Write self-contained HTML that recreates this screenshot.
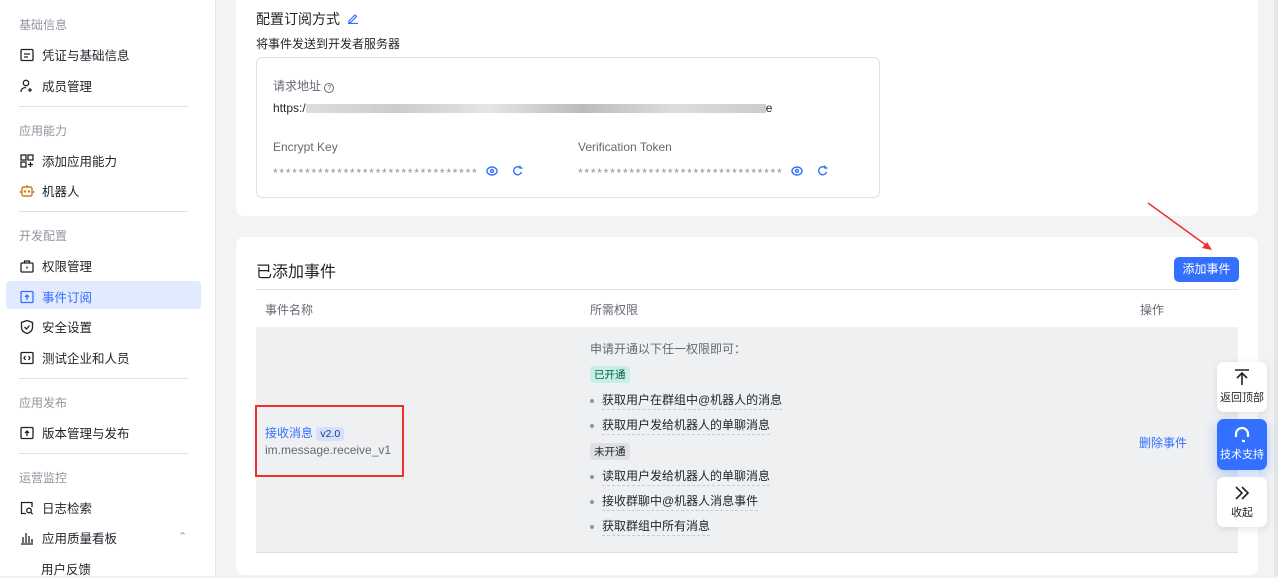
<!DOCTYPE html>
<html><head><meta charset="utf-8"><style>
*{box-sizing:border-box;margin:0;padding:0}
body{width:1278px;height:576px;overflow:hidden;background:#f2f3f5;font-family:"Liberation Sans","Noto Sans CJK SC",sans-serif;font-size:12px;color:#1f2329;position:relative}
.sb{position:absolute;left:0;top:0;width:216px;height:576px;background:#fff;border-right:1px solid #e4e5e7}
.grp{position:absolute;left:19px;color:#8f959e;font-size:12px}
.it{position:absolute;left:19px;font-size:12.5px;color:#1f2329;display:flex;align-items:center;gap:7px}
.it svg{width:16px;height:16px}
.hr{position:absolute;left:19px;width:169px;height:1px;background:#dee0e3}
.card{position:absolute;left:236px;width:1022px;background:#fff;border-radius:8px}
.blue{color:#3370ff}
.dot{display:inline-block;width:4px;height:4px;border-radius:50%;background:#8f959e;margin-right:8px;vertical-align:middle}
.perm{position:absolute;left:590px;font-size:12px;color:#1f2329}
.perm span.u{border-bottom:1px dashed #c9cdd4;padding-bottom:2px}
.fb{position:absolute;left:1217px;width:50px;border-radius:7px;background:#fff;box-shadow:0 2px 8px rgba(0,0,0,.1);text-align:center;font-size:11px;color:#1f2329}
.ast{position:absolute;color:#8f959e;letter-spacing:1.75px}
</style></head><body>
<div class="sb">
<div class="grp" style="top:16px">基础信息</div>
<div class="it" style="top:45px"><svg viewBox="0 0 16 16" fill="none" stroke="#1f2329" stroke-width="1.3"><rect x="2" y="2.5" width="12" height="11" rx="1"/><path d="M5 7h6M5 10h4"/></svg>凭证与基础信息</div>
<div class="it" style="top:76px"><svg viewBox="0 0 16 16" fill="none" stroke="#1f2329" stroke-width="1.3"><circle cx="7" cy="5" r="2.7"/><path d="M2 14c0-3 2-4.5 5-4.5M11 10v4M9 12h4"/></svg>成员管理</div>
<div class="hr" style="top:106px"></div>
<div class="grp" style="top:122px">应用能力</div>
<div class="it" style="top:151px"><svg viewBox="0 0 16 16" fill="none" stroke="#1f2329" stroke-width="1.3"><rect x="2" y="2" width="5" height="5"/><rect x="9" y="2" width="5" height="5"/><rect x="2" y="9" width="5" height="5"/><path d="M11.5 9v5M9 11.5h5"/></svg>添加应用能力</div>
<div class="it" style="top:181px"><svg viewBox="0 0 16 16" fill="none" stroke="#d4791a" stroke-width="1.4"><rect x="3" y="4" width="10" height="9" rx="1.5"/><path d="M8 2v2M1.5 8v2M14.5 8v2"/><circle cx="6" cy="8.5" r=".5" fill="#d4791a"/><circle cx="10" cy="8.5" r=".5" fill="#d4791a"/></svg>机器人</div>
<div class="hr" style="top:211px"></div>
<div class="grp" style="top:227px">开发配置</div>
<div class="it" style="top:256px"><svg viewBox="0 0 16 16" fill="none" stroke="#1f2329" stroke-width="1.3"><rect x="2" y="5" width="12" height="9" rx="1"/><path d="M5.5 5V3h5v2M8 8.5v2"/></svg>权限管理</div>
<div style="position:absolute;left:6px;top:281px;width:195px;height:28px;background:#e1eaff;border-radius:4px"></div>
<div class="it blue" style="top:287px"><svg viewBox="0 0 16 16" fill="none" stroke="#3370ff" stroke-width="1.3"><rect x="2" y="2.5" width="12" height="11" rx="1"/><path d="M8 11V6M6 8l2-2 2 2"/></svg>事件订阅</div>
<div class="it" style="top:317px"><svg viewBox="0 0 16 16" fill="none" stroke="#1f2329" stroke-width="1.3"><path d="M8 1.5l5.5 2v5c0 3-2.5 5-5.5 6-3-1-5.5-3-5.5-6v-5z"/><path d="M5.5 8l2 2 3-3.5"/></svg>安全设置</div>
<div class="it" style="top:348px"><svg viewBox="0 0 16 16" fill="none" stroke="#1f2329" stroke-width="1.3"><rect x="2" y="2.5" width="12" height="11" rx="1"/><path d="M6.5 6L5 8l1.5 2M9.5 6L11 8l-1.5 2"/></svg>测试企业和人员</div>
<div class="hr" style="top:378px"></div>
<div class="grp" style="top:394px">应用发布</div>
<div class="it" style="top:423px"><svg viewBox="0 0 16 16" fill="none" stroke="#1f2329" stroke-width="1.3"><rect x="2" y="2.5" width="12" height="11" rx="1"/><path d="M8 11V6M6 8l2-2 2 2"/></svg>版本管理与发布</div>
<div class="hr" style="top:453px"></div>
<div class="grp" style="top:469px">运营监控</div>
<div class="it" style="top:498px"><svg viewBox="0 0 16 16" fill="none" stroke="#1f2329" stroke-width="1.3"><path d="M13 7V2.5H2.5v11H7"/><circle cx="10" cy="10.5" r="2.3"/><path d="M11.7 12.2l2 2"/></svg>日志检索</div>
<div class="it" style="top:528px"><svg viewBox="0 0 16 16" fill="none" stroke="#1f2329" stroke-width="1.3"><path d="M2 14h12M4 13V7M7 13V3M10 13V6M13 13V9"/></svg>应用质量看板</div>
<div style="position:absolute;left:178px;top:530px;color:#8f959e;font-size:11px">⌃</div>
<div class="it" style="top:559px;left:41px">用户反馈</div>
</div>

<div class="card" style="top:-10px;height:226px">
<div style="position:absolute;left:20px;top:19px;font-size:14px">配置订阅方式 <svg width="12" height="12" viewBox="0 0 12 12" fill="none" stroke="#3370ff" stroke-width="1.2" style="margin-left:3px"><path d="M2 9l6-6 1.5 1.5-6 6H2zM1 11.5h10"/></svg></div>
<div style="position:absolute;left:20px;top:45px;font-size:12px">将事件发送到开发者服务器</div>
<div style="position:absolute;left:20px;top:67px;width:624px;height:141px;border:1px solid #dee0e3;border-radius:6px">
<div style="position:absolute;left:16px;top:19px;color:#646a73">请求地址 <span style="display:inline-block;width:10px;height:10px;border:1px solid #646a73;border-radius:50%;font-size:7px;text-align:center;line-height:9px">?</span></div>
<div style="position:absolute;left:16px;top:43px">https:/<span style="display:inline-block;width:460px;height:9px;background:linear-gradient(90deg,#ddd,#ccc 20%,#e5e5e5 40%,#bbb 60%,#ddd 80%,#ccc);vertical-align:middle"></span>e</div>
<div style="position:absolute;left:16px;top:82px;color:#646a73">Encrypt Key</div>
<div class="ast" style="left:16px;top:108px">********************************</div>
<div style="position:absolute;left:321px;top:82px;color:#646a73">Verification Token</div>
<div class="ast" style="left:321px;top:108px">********************************</div>
<svg style="position:absolute;left:229px;top:106px" width="40" height="14" viewBox="0 0 40 14" fill="none" stroke="#3370ff" stroke-width="1.4"><ellipse cx="6" cy="7" rx="5" ry="4"/><circle cx="6" cy="7" r="1.5"/><path d="M34 3.5a4 4 0 1 0 1.5 4.5M34 1.5v2.5h2.5"/></svg>
<svg style="position:absolute;left:534px;top:106px" width="40" height="14" viewBox="0 0 40 14" fill="none" stroke="#3370ff" stroke-width="1.4"><ellipse cx="6" cy="7" rx="5" ry="4"/><circle cx="6" cy="7" r="1.5"/><path d="M34 3.5a4 4 0 1 0 1.5 4.5M34 1.5v2.5h2.5"/></svg>
</div>
</div>

<div class="card" style="top:237px;height:338px">
<div style="position:absolute;left:20px;top:21px;font-size:16px">已添加事件</div>
<div style="position:absolute;left:938px;top:20px;width:65px;height:25px;background:#3370ff;border-radius:5px;color:#fff;text-align:center;line-height:25px;font-size:12px">添加事件</div>
<div style="position:absolute;left:20px;top:52px;width:982px;height:1px;background:#dee0e3"></div>
<div style="position:absolute;left:29px;top:64px;color:#646a73">事件名称</div>
<div style="position:absolute;left:354px;top:64px;color:#646a73">所需权限</div>
<div style="position:absolute;left:904px;top:64px;color:#646a73">操作</div>
<div style="position:absolute;left:20px;top:90px;width:982px;height:226px;background:#eff0f2;border-bottom:1px solid #dee0e3"></div>
<div style="position:absolute;left:19px;top:168px;width:149px;height:72px;border:2px solid #f0302a"></div>
<div style="position:absolute;left:29px;top:187px;color:#3370ff">接收消息 <span style="background:#d6e0f8;color:#1f3a8a;border-radius:3px;padding:1px 4px;font-size:10.5px">v2.0</span></div>
<div style="position:absolute;left:29px;top:206px;color:#646a73">im.message.receive_v1</div>
<div style="position:absolute;left:903px;top:197px;color:#3370ff">删除事件</div>
</div>
<div class="perm" style="top:340px;color:#646a73">申请开通以下任一权限即可：</div>
<div class="perm" style="top:366px;background:#c6f0e6;color:#0b5a47;border-radius:3px;padding:1px 4px;font-size:10.5px">已开通</div>
<div class="perm" style="top:391px"><span class="dot"></span><span class="u">获取用户在群组中@机器人的消息</span></div>
<div class="perm" style="top:416px"><span class="dot"></span><span class="u">获取用户发给机器人的单聊消息</span></div>
<div class="perm" style="top:443px;background:#dee0e3;color:#1f2329;border-radius:3px;padding:1px 4px;font-size:10.5px">未开通</div>
<div class="perm" style="top:467px"><span class="dot"></span><span class="u">读取用户发给机器人的单聊消息</span></div>
<div class="perm" style="top:492px"><span class="dot"></span><span class="u">接收群聊中@机器人消息事件</span></div>
<div class="perm" style="top:517px"><span class="dot"></span><span class="u">获取群组中所有消息</span></div>

<svg style="position:absolute;left:1140px;top:198px" width="80" height="60"><path d="M8 5L70 50" stroke="#f0302a" stroke-width="1.5"/><path d="M72 52l-10-2 5-6z" fill="#f0302a"/></svg>

<div style="position:absolute;left:1274px;top:0;width:4px;height:576px;background:#e4e5e7"></div>
<div class="fb" style="top:362px;height:50px"><svg width="20" height="20" viewBox="0 0 20 20" fill="none" stroke="#1f2329" stroke-width="1.6" style="margin-top:5px"><path d="M3 3h14M10 18V6M5 11l5-5 5 5"/></svg><div style="margin-top:-1px">返回顶部</div></div>
<div class="fb" style="top:419px;height:51px;background:#3370ff;color:#fff;box-shadow:0 4px 12px rgba(51,112,255,.35)"><svg width="20" height="20" viewBox="0 0 20 20" fill="none" stroke="#fff" stroke-width="2.2" style="margin-top:6px"><path d="M4 12V9a6 6 0 0 1 12 0v3M10 16h3"/></svg><div style="margin-top:-2px">技术支持</div></div>
<div class="fb" style="top:477px;height:50px"><svg width="20" height="20" viewBox="0 0 20 20" fill="none" stroke="#1f2329" stroke-width="1.6" style="margin-top:6px"><path d="M4 4l6 6-6 6M10 4l6 6-6 6"/></svg><div style="margin-top:-2px">收起</div></div>
</body></html>
